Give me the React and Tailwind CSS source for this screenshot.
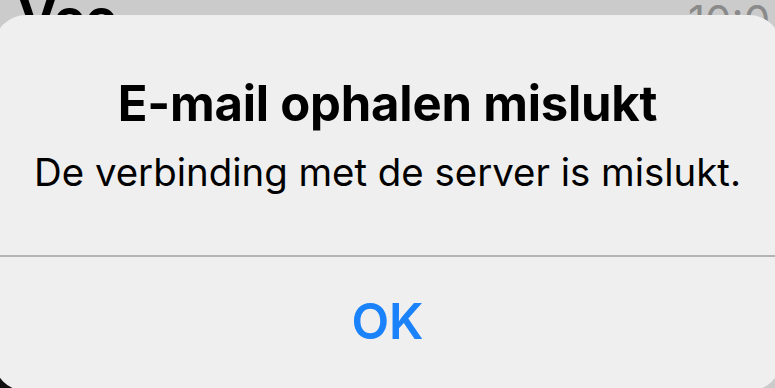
import React from 'react';

const App = () => {
  return (
    <div className="relative w-[775px] h-[388px] overflow-hidden bg-[#cbcbcb]" style={{ fontFamily: 'Inter, "Noto Sans", sans-serif' }}>
      {/* screen behind the alert */}
      <div className="absolute left-[18px] top-[-8px] text-[52px] font-bold text-black leading-none">Voo</div>
      <div className="absolute left-[688px] top-[0px] text-[42px] text-[#8a8a8a] leading-none">10:0</div>
      <div className="absolute left-0 bottom-0 w-[40px] h-[10px] bg-[#111]" />

      {/* alert */}
      <div className="absolute left-[-6px] top-[15px] w-[787px] h-[376px] rounded-[32px] bg-[#efefef] flex flex-col">
        <div className="h-[240px] flex flex-col items-center pt-[64px]">
          <h1 className="text-[49px] font-bold text-black leading-none tracking-[-0.2px]">E-mail ophalen mislukt</h1>
          <p className="mt-[25px] text-[38.4px] text-black leading-none">De verbinding met de server is mislukt.</p>
        </div>
        <div className="h-[2px] bg-[#b4b4b4]" />
        <button className="h-[128px] flex items-center justify-center text-[49px] font-semibold text-[#1a82fb] leading-none">
          OK
        </button>
      </div>
    </div>
  );
};

export default App;
